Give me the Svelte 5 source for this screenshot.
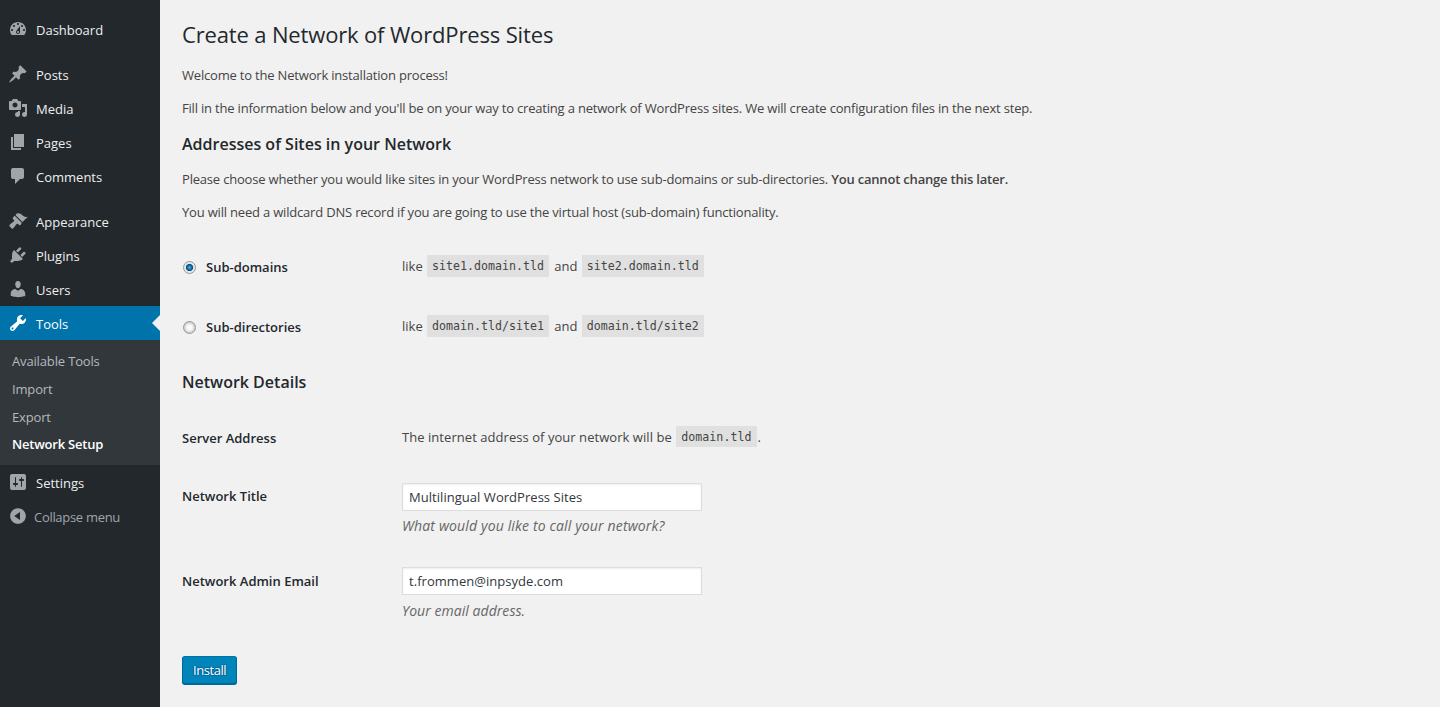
<script>
  const menuGroups = [
    [
      { label: 'Dashboard', d: 'M3.76 16h12.48c1.1-1.37 1.76-3.11 1.76-5 0-4.42-3.58-8-8-8s-8 3.58-8 8c0 1.89.66 3.63 1.76 5zM10 4c.55 0 1 .45 1 1s-.45 1-1 1-1-.45-1-1 .45-1 1-1zM6 6c.55 0 1 .45 1 1s-.45 1-1 1-1-.45-1-1 .45-1 1-1zm8 0c.55 0 1 .45 1 1s-.45 1-1 1-1-.45-1-1 .45-1 1-1zm-5.37 5.55L12 7v6c0 1.1-.9 2-2 2s-2-.9-2-2c0-.57.24-1.08.63-1.45zM4 10c.55 0 1 .45 1 1s-.45 1-1 1-1-.45-1-1 .45-1 1-1zm12 0c.55 0 1 .45 1 1s-.45 1-1 1-1-.45-1-1 .45-1 1-1zm-5 3c0-.55-.45-1-1-1s-1 .45-1 1 .45 1 1 1 1-.45 1-1z' }
    ],
    [
      { label: 'Posts', d: 'M10.44 3.02l1.82-1.82 6.36 6.35-1.83 1.82c-1.05-.68-2.48-.57-3.41.36l-.75.75c-.92.93-1.04 2.35-.35 3.41l-1.83 1.82-2.41-2.41-2.8 2.79c-.42.42-3.38 2.71-3.8 2.29s1.86-3.39 2.28-3.81l2.79-2.79L4.1 9.36l1.83-1.82c1.05.69 2.48.57 3.4-.36l.75-.75c.93-.92 1.05-2.35.36-3.41z' },
      { label: 'Media', d: 'M13 11V4c0-.55-.45-1-1-1h-1.67L9 1H5L3.67 3H2c-.55 0-1 .45-1 1v7c0 .55.45 1 1 1h10c.55 0 1-.45 1-1zM7 4.5c1.38 0 2.5 1.12 2.5 2.5S8.38 9.5 7 9.5 4.5 8.38 4.5 7 5.62 4.5 7 4.5zM14 6h5v10.5c0 1.38-1.12 2.5-2.5 2.5S14 17.88 14 16.5s1.12-2.5 2.5-2.5c.17 0 .34.02.5.05V9h-3V6zm-4 8.05V13h2v3.5c0 1.38-1.12 2.5-2.5 2.5S7 17.88 7 16.5 8.12 14 9.5 14c.17 0 .34.02.5.05z' },
      { label: 'Pages', d: 'M6 15V2h10v13H6zm-1 1h8v2H3V5h2v11z' },
      { label: 'Comments', d: 'M5 2h9c1.1 0 2 .9 2 2v7c0 1.1-.9 2-2 2h-2l-5 5v-5H5c-1.1 0-2-.9-2-2V4c0-1.1.9-2 2-2z' }
    ],
    [
      { label: 'Appearance', d: 'M14.48 11.06L7.41 3.99l1.5-1.5c.5-.56 2.3-.47 3.51.32 1.21.8 1.43 1.28 2.91 2.1 1.18.64 2.45 1.26 4.45.85zm-.71.71L6.7 4.7 4.93 6.47c-.39.39-.39 1.02 0 1.41l1.06 1.06c.39.39.39 1.03 0 1.42-.6.6-1.43 1.11-2.21 1.7-.79.58-1.43 1.09-2.22 1.87-.39.39-.39 1.02 0 1.41l2.12 2.12c.39.39 1.02.39 1.41 0 .79-.79 1.29-1.43 1.87-2.22.59-.78 1.1-1.61 1.7-2.21.39-.39 1.03-.39 1.42 0l1.06 1.06c.39.39 1.02.39 1.41 0z' },
      { label: 'Plugins', d: 'M13.11 4.36L9.87 7.6 8 5.73l3.24-3.24c.35-.34 1.05-.2 1.56.32.52.51.66 1.21.31 1.55zm-8 1.77l.91-1.12 9.01 9.01-1.19.84c-.71.71-2.63 1.16-3.82 1.16H6.14L4.9 17.26c-.59.59-1.54.59-2.12 0-.59-.58-.59-1.53 0-2.12l1.24-1.24v-3.88c0-1.13.4-3.19 1.09-3.89zm7.26 3.97l3.24-3.24c.34-.35 1.04-.21 1.55.31.52.51.66 1.21.31 1.55l-3.24 3.25z' },
      { label: 'Users', d: 'M10 9.25c-2.27 0-2.73-3.44-2.73-3.44C7 4.02 7.82 2 9.97 2c2.16 0 2.98 2.02 2.71 3.81 0 0-.41 3.44-2.68 3.44zm0 2.57L12.72 10c2.39 0 4.52 2.33 4.52 4.53v2.49s-3.65 1.13-7.24 1.13c-3.65 0-7.24-1.13-7.24-1.13v-2.49c0-2.25 1.94-4.48 4.47-4.48z' }
    ]
  ]
  const toolsIcon = 'M16.68 9.77c-1.34 1.34-3.3 1.67-4.95.99l-5.41 6.52c-.99.99-2.59.99-3.58 0s-.99-2.59 0-3.57l6.52-5.42c-.68-1.65-.35-3.61.99-4.95 1.28-1.28 3.12-1.62 4.72-1.06l-2.89 2.89 2.82 2.82 2.86-2.87c.53 1.58.18 3.39-1.08 4.65zM3.81 16.21c.4.39 1.04.39 1.43 0 .4-.4.4-1.04 0-1.43-.39-.4-1.03-.4-1.43 0-.39.39-.39 1.03 0 1.43z'
  const settingsIcon = 'M18 16V4c0-1.1-.9-2-2-2H4c-1.1 0-2 .9-2 2v12c0 1.1.9 2 2 2h12c1.1 0 2-.9 2-2zM8 11h1c.55 0 1 .45 1 1s-.45 1-1 1H8v1.5c0 .28-.22.5-.5.5s-.5-.22-.5-.5V13H6c-.55 0-1-.45-1-1s.45-1 1-1h1V5.5c0-.28.22-.5.5-.5s.5.22.5.5V11zm5-2h-1c-.55 0-1-.45-1-1s.45-1 1-1h1V5.5c0-.28.22-.5.5-.5s.5.22.5.5V7h1c.55 0 1 .45 1 1s-.45 1-1 1h-1v5.5c0 .28-.22.5-.5.5s-.5-.22-.5-.5V9z'
  const collapseIcon = 'M10 2.16c4.33 0 7.84 3.51 7.84 7.84s-3.51 7.84-7.84 7.84S2.16 14.33 2.16 10 5.71 2.16 10 2.16zm2 11.72V6.12L6.18 9.97z'
  const submenu = ['Available Tools', 'Import', 'Export']

  let siteType = $state('subdomain')
  let title = $state('Multilingual WordPress Sites')
  let email = $state('t.frommen@inpsyde.com')
</script>

<div class="wrap">
  <nav class="sidebar">
    {#each menuGroups as group}
      <ul class="group">
        {#each group as item}
          <li class="item">
            <svg class="icon" viewBox="0 0 20 20" aria-hidden="true"><path d={item.d}></path></svg>
            <span>{item.label}</span>
          </li>
        {/each}
      </ul>
    {/each}
    <div class="item active">
      <svg class="icon" viewBox="0 0 20 20" aria-hidden="true"><path d={toolsIcon}></path></svg>
      <span>Tools</span>
    </div>
    <ul class="submenu">
      {#each submenu as name}
        <li>{name}</li>
      {/each}
      <li class="current">Network Setup</li>
    </ul>
    <div class="item settings">
      <svg class="icon" viewBox="0 0 20 20" aria-hidden="true"><path d={settingsIcon}></path></svg>
      <span>Settings</span>
    </div>
    <div class="item collapse">
      <svg class="icon" viewBox="0 0 20 20" aria-hidden="true"><path d={collapseIcon}></path></svg>
      <span>Collapse menu</span>
    </div>
  </nav>

  <main class="content">
    <h1>Create a Network of WordPress Sites</h1>
    <p class="first">Welcome to the Network installation process!</p>
    <p>Fill in the information below and you'll be on your way to creating a network of WordPress sites. We will create configuration files in the next step.</p>
    <h3>Addresses of Sites in your Network</h3>
    <p class="first">Please choose whether you would like sites in your WordPress network to use sub-domains or sub-directories. <strong>You cannot change this later.</strong></p>
    <p>You will need a wildcard DNS record if you are going to use the virtual host (sub-domain) functionality.</p>

    <table class="choices">
      <tbody>
        <tr>
          <th><label><input type="radio" name="site" value="subdomain" bind:group={siteType} />Sub-domains</label></th>
          <td>like <code>site1.domain.tld</code> and <code>site2.domain.tld</code></td>
        </tr>
        <tr>
          <th><label><input type="radio" name="site" value="subdir" bind:group={siteType} />Sub-directories</label></th>
          <td>like <code>domain.tld/site1</code> and <code>domain.tld/site2</code></td>
        </tr>
      </tbody>
    </table>

    <h3 class="details">Network Details</h3>
    <table class="form">
      <tbody>
        <tr class="server">
          <th>Server Address</th>
          <td>The internet address of your network will be <code>domain.tld</code>.</td>
        </tr>
        <tr class="field">
          <th>Network Title</th>
          <td>
            <input class="text" type="text" bind:value={title} />
            <p class="hint">What would you like to call your network?</p>
          </td>
        </tr>
        <tr class="field last">
          <th>Network Admin Email</th>
          <td>
            <input class="text" type="text" bind:value={email} />
            <p class="hint">Your email address.</p>
          </td>
        </tr>
      </tbody>
    </table>
    <button class="install" type="button">Install</button>
  </main>
</div>

<style>
  :global(body) {
    background: #f1f1f1;
    color: #444;
    font-family: 'Open Sans', sans-serif;
    font-size: 13px;
    line-height: 1.4;
  }

  .wrap {
    display: flex;
    height: 707px;
    overflow: hidden;
  }

  .sidebar {
    width: 160px;
    flex: none;
    background: #23282d;
    padding-top: 13px;
    box-sizing: border-box;
  }

  .group {
    list-style: none;
    margin: 0 0 11px;
    padding: 0;
  }

  .group:nth-child(3) {
    margin-bottom: 0;
  }

  .item {
    position: relative;
    display: flex;
    align-items: center;
    height: 34px;
    padding-left: 36px;
    color: #eee;
    font-size: 13px;
  }

  .icon {
    position: absolute;
    left: 8px;
    top: 6px;
    width: 20px;
    height: 20px;
    fill: #a0a5aa;
  }

  .active {
    height: 32px;
    margin-top: -1px;
    padding-top: 2px;
    background: #0073aa;
    color: #fff;
  }

  .active .icon {
    top: 7px;
    fill: #fff;
  }

  .active::after {
    content: '';
    position: absolute;
    right: 0;
    top: 9px;
    border: 8px solid transparent;
    border-left-width: 0;
    border-right-color: #f1f1f1;
  }

  .submenu {
    list-style: none;
    margin: 0;
    padding: 8.3px 0 5.7px;
    background: #32373c;
    color: #b4b9be;
    font-size: 13px;
    letter-spacing: -.15px;
  }

  .submenu li {
    height: 27.7px;
    line-height: 27.7px;
    padding-left: 12px;
  }

  .submenu .current {
    color: #fff;
    font-weight: 600;
    letter-spacing: -.22px;
  }

  .settings {
    margin-top: 1px;
  }

  .collapse {
    padding-left: 34px;
    color: #a0a5aa;
    letter-spacing: -.3px;
  }

  .content {
    flex: 1;
    padding-left: 22px;
  }

  h1 {
    margin: 0;
    padding-top: 18px;
    color: #23282d;
    font-size: 22px;
    font-weight: 400;
    line-height: 32px;
    letter-spacing: -.15px;
  }

  p {
    margin: 13px 0 0;
    line-height: 1.5;
    letter-spacing: -.19px;
  }

  p.first {
    margin-top: 16px;
  }

  strong {
    font-weight: 600;
  }

  h3 {
    margin: 15px 0 0;
    color: #23282d;
    font-size: 16px;
    font-weight: 600;
    line-height: 22px;
  }

  h3 + p.first {
    margin-top: 15px;
  }

  table {
    border-collapse: collapse;
  }

  th {
    width: 220px;
    padding: 0;
    color: #23282d;
    font-weight: 600;
    text-align: left;
    box-sizing: border-box;
  }

  td {
    padding: 0;
  }

  .choices {
    margin-top: 15px;
  }

  .choices tr {
    height: 60px;
  }

  .choices td {
    padding-bottom: 2px;
  }

  label {
    display: flex;
    align-items: center;
  }

  input[type='radio'] {
    appearance: none;
    width: 13px;
    height: 13px;
    margin: 0 10px 0 1px;
    border: 1px solid #9a9a9a;
    border-radius: 50%;
    background: radial-gradient(circle, #fafafa 0 2.5px, #d0d0d0 5px);
    box-sizing: border-box;
  }

  input[type='radio']:checked {
    background: radial-gradient(circle, #4fb3e8 0, #1273b0 2px, #0c4a78 3.3px, #e6e6e6 3.9px);
  }

  code {
    display: inline-block;
    margin: 0 2px 0 1px;
    padding: 3px 5px 2px;
    background: rgba(0, 0, 0, .07);
    color: #444;
    font-family: 'DejaVu Sans Mono', monospace;
    font-size: 11.62px;
    vertical-align: 1px;
  }

  .details {
    margin-top: 14px;
  }

  .form tr {
    vertical-align: top;
  }

  .server {
    height: 90px;
  }

  .server th {
    padding-top: 36px;
  }

  .server td {
    padding-top: 33px;
    letter-spacing: .05px;
  }

  .server code {
    margin-right: 1px;
  }

  .field {
    height: 84px;
  }

  .field th {
    padding-top: 4px;
  }

  .last th {
    padding-top: 5px;
  }

  .text {
    display: block;
    width: 300px;
    height: 28px;
    padding: 3px 6px;
    border: 1px solid #ddd;
    background: #fff;
    box-shadow: inset 0 1px 2px rgba(0, 0, 0, .07);
    color: #32373c;
    font-family: inherit;
    font-size: 13px;
    letter-spacing: .04px;
    box-sizing: border-box;
  }

  .hint {
    margin: 5px 0 0;
    color: #666;
    font-size: 14px;
    font-style: italic;
    line-height: 1.4;
    letter-spacing: .15px;
  }

  .last .hint {
    margin-top: 6px;
    letter-spacing: .05px;
  }

  .install {
    display: block;
    height: 28px;
    margin-top: 5px;
    padding: 0 10px;
    border: 1px solid;
    border-color: #0073aa #006799 #006799;
    border-radius: 3px;
    background: #0085ba;
    box-shadow: 0 1px 0 #006799;
    color: #fff;
    font-family: inherit;
    font-size: 13px;
    letter-spacing: -.45px;
    text-shadow: 0 -1px 1px #006799, 1px 0 1px #006799, 0 1px 1px #006799, -1px 0 1px #006799;
  }
</style>
